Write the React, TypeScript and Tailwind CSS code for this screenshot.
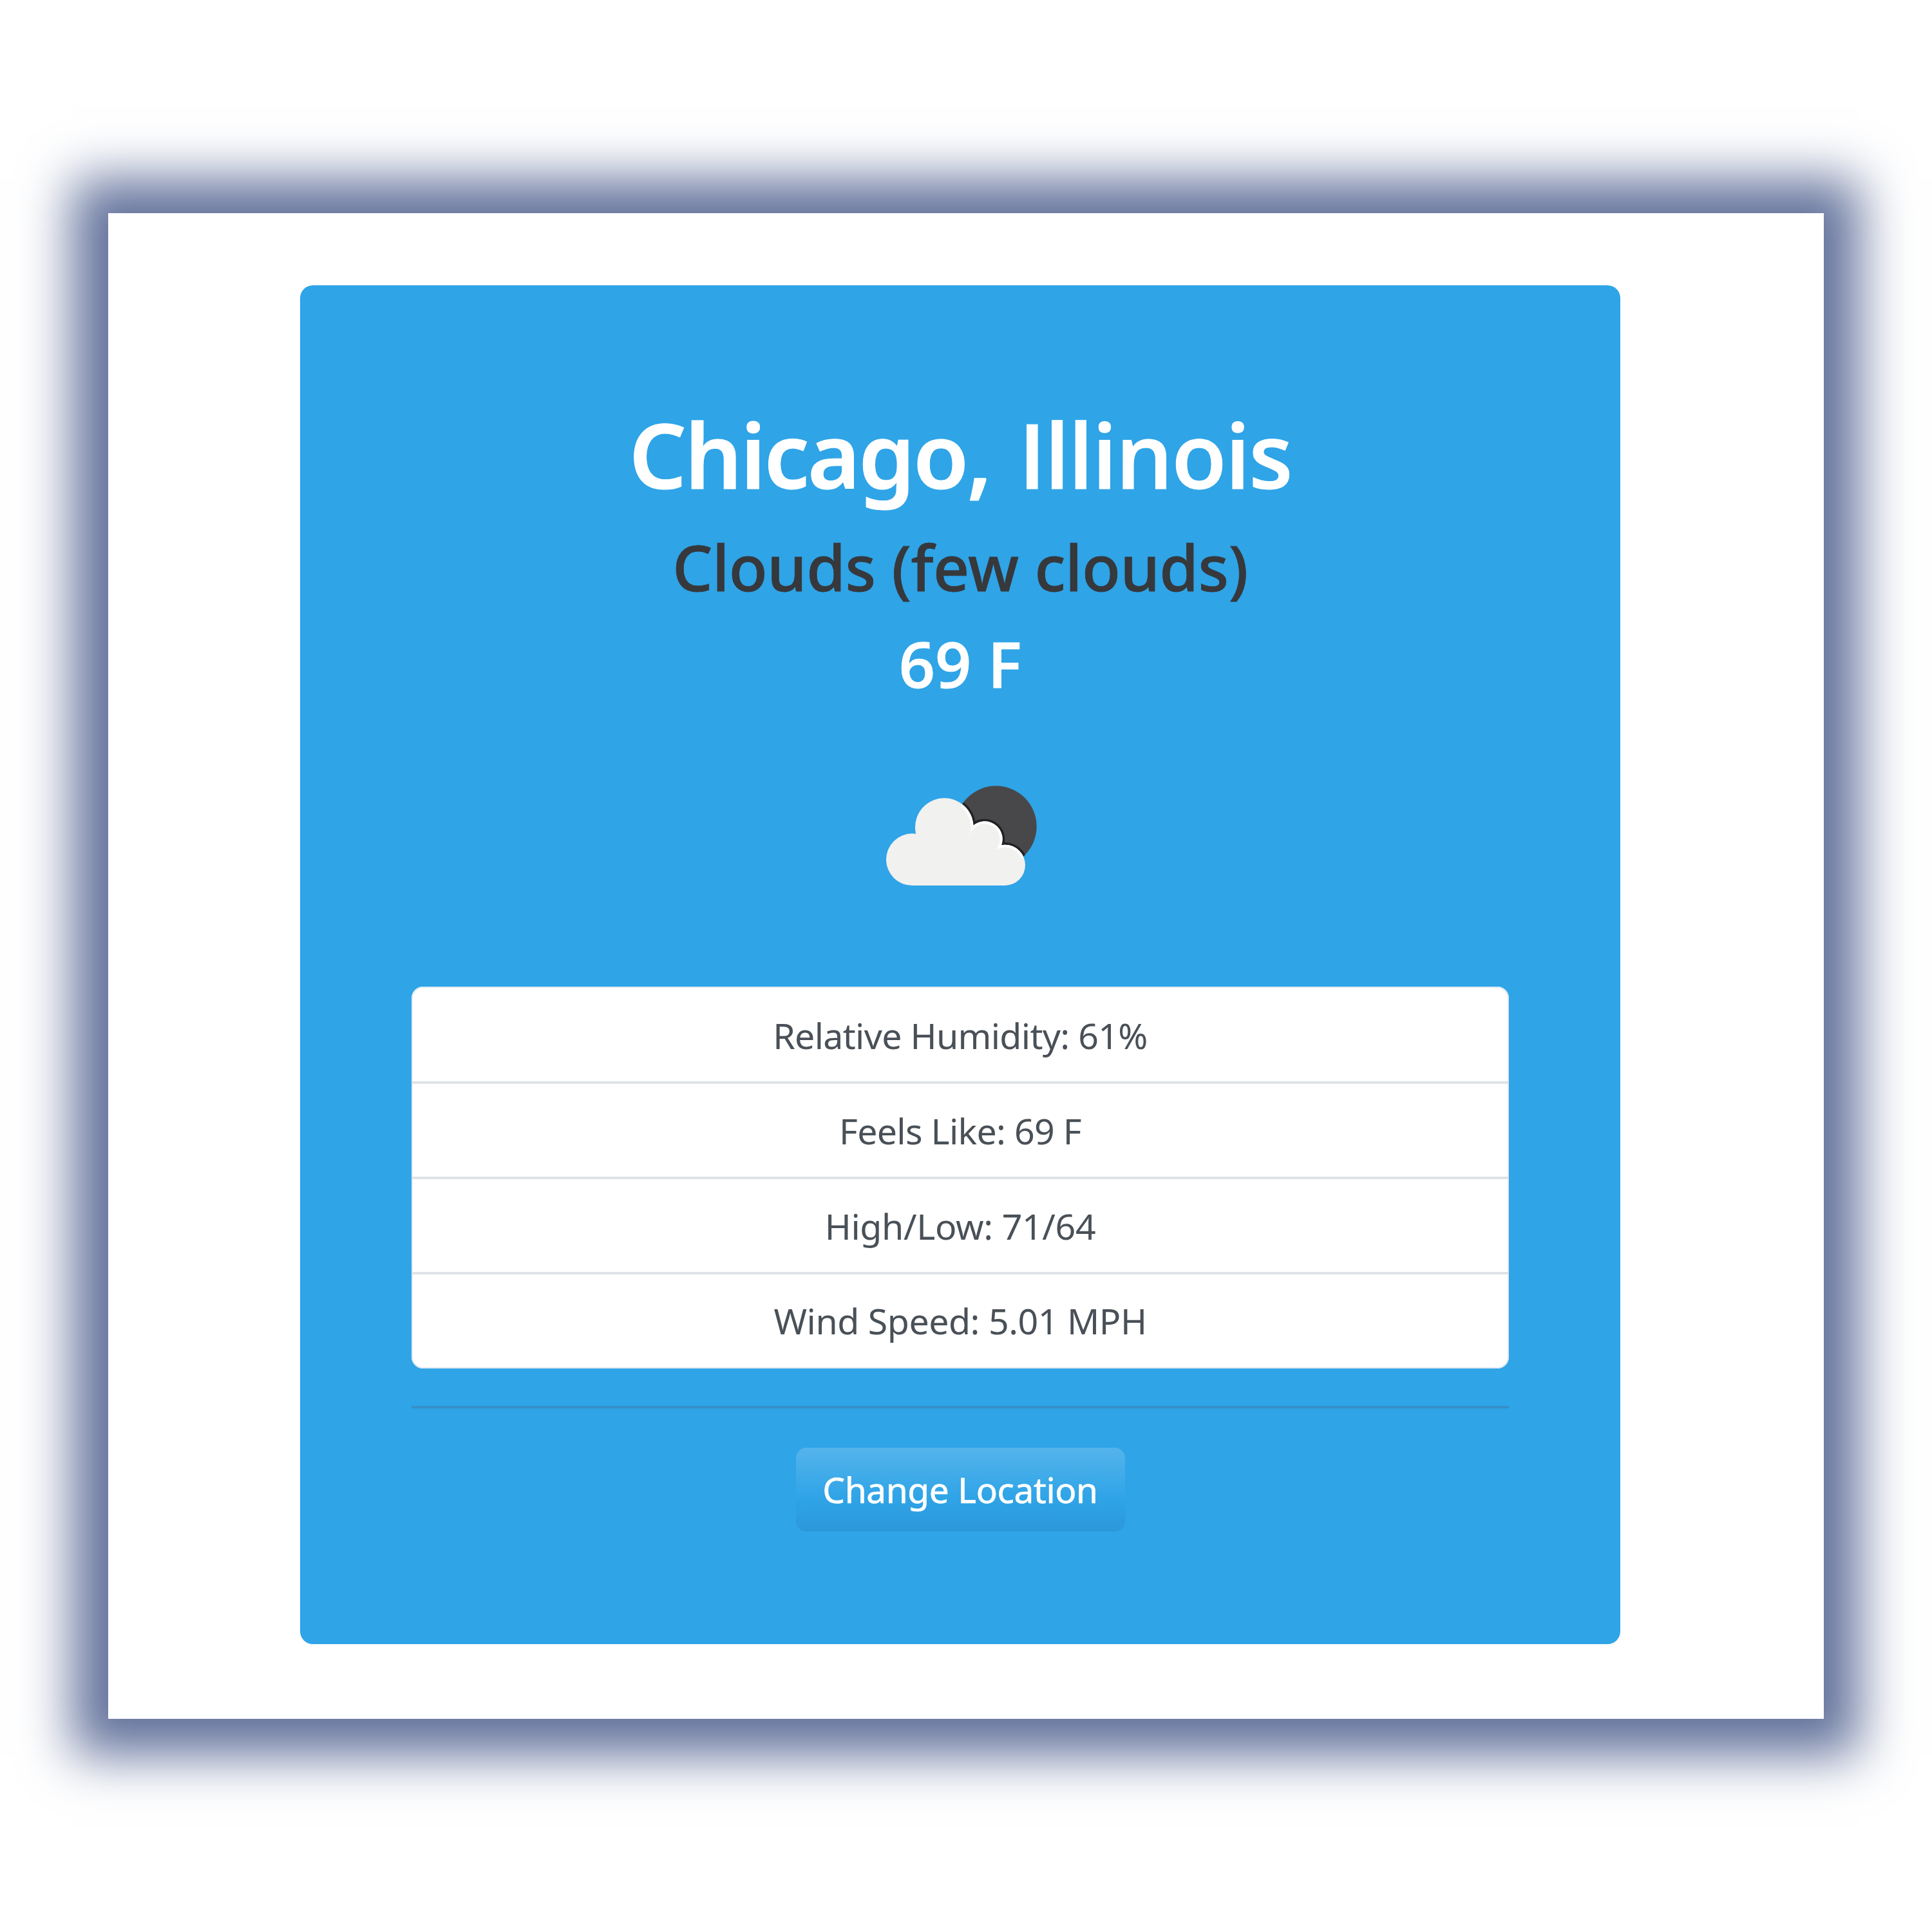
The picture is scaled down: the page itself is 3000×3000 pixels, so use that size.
const conditions = [
  { text: "Relative Humidity: 61%", fit: "tracking-[-0.7px]" },
  { text: "Feels Like: 69 F", fit: "tracking-[-0.7px]" },
  { text: "High/Low: 71/64", fit: "tracking-[-0.4px]" },
  { text: "Wind Speed: 5.01 MPH", fit: "tracking-[-0.5px]" },
];

function CloudShape({ grow, fill }: { grow: number; fill: string }) {
  return (
    <g fill={fill}>
      <circle cx="229" cy="461" r={121 + grow} />
      <circle cx="379" cy="311" r={136 + grow} />
      <circle cx="567" cy="366" r={83 + grow} />
      <circle cx="661" cy="487" r={95 + grow} />
      <path d="M229 582V400L379 311L520 366L661 430V582Z" />
    </g>
  );
}

function CloudIcon() {
  return (
    <svg viewBox="3 0 900 660" className="mx-auto mt-[87px] block h-[220px] w-[300px]">
      <defs>
        <clipPath id="sun">
          <circle cx="620" cy="307" r="189" />
        </clipPath>
      </defs>
      <circle cx="620" cy="307" r="189" fill="#48484a" />
      <g clipPath="url(#sun)">
        <CloudShape grow={11} fill="#222224" />
      </g>
      <CloudShape grow={0} fill="#f1f1f0" />
      <g clipPath="url(#sun)">
        <CloudShape grow={0} fill="#ffffff" />
        <CloudShape grow={-12} fill="#f1f1f0" />
      </g>
    </svg>
  );
}

export default function App() {
  return (
    <div className="flex h-[3000px] w-[3000px] flex-col bg-white px-[168px] pt-[331px] font-['Noto_Sans','Open_Sans',sans-serif]">
      <main className="h-[2338px] w-[2664px] bg-white pl-[298px] pt-[112px] shadow-[0_2px_76px_55px_#64739c]">
        <section className="h-[2110px] w-[2050px] rounded-[20px] bg-[#2fa4e7] px-[173px] pt-[177px] text-center">
          <h1 className="whitespace-nowrap text-[140px] font-semibold leading-[170px] tracking-[-2.8px] text-white [-webkit-text-stroke:1px_#fff] [word-spacing:10px]">
            Chicago, <span className="font-['Open_Sans'] tracking-[-2.2px]">Illinois</span>
          </h1>
          <h2 className="mt-[26px] whitespace-nowrap text-[98px] font-medium leading-[128px] tracking-[-0.5px] text-[#36383c] [-webkit-text-stroke:0.8px_#36383c]">
            Clouds (few clouds)
          </h2>
          <h2 className="mt-[22px] whitespace-nowrap font-['Open_Sans'] text-[98.5px] font-semibold leading-[128px] text-white [-webkit-text-stroke:1px_#fff]">
            69 F
          </h2>
          <CloudIcon />
          <ul className="mt-[131px] h-[593px] overflow-hidden rounded-[18px] bg-white shadow-[inset_0_0_0_2px_#e0e9f1]">
            {conditions.map((c) => (
              <li
                key={c.text}
                className="h-[147.6px] border-t-4 border-[#dfe3e7] pt-[30.7px] text-[55.5px] leading-[84px] text-[#495057] first:h-[147.4px] first:border-0 first:pt-[34px]"
              >
                <span className={c.fit}>{c.text}</span>
              </li>
            ))}
          </ul>
          <hr className="mt-[58px] h-[4px] border-0 bg-[#3690c8]" />
          <button className="mx-auto mt-[61px] block h-[130px] w-[511px] rounded-[16px] bg-[linear-gradient(#54b4eb,#2fa4e7_60%,#2b98da)] text-[55px] leading-[130px] tracking-[-0.4px] text-white [-webkit-text-stroke:0.6px_#fff]">
            Change Location
          </button>
        </section>
      </main>
    </div>
  );
}
